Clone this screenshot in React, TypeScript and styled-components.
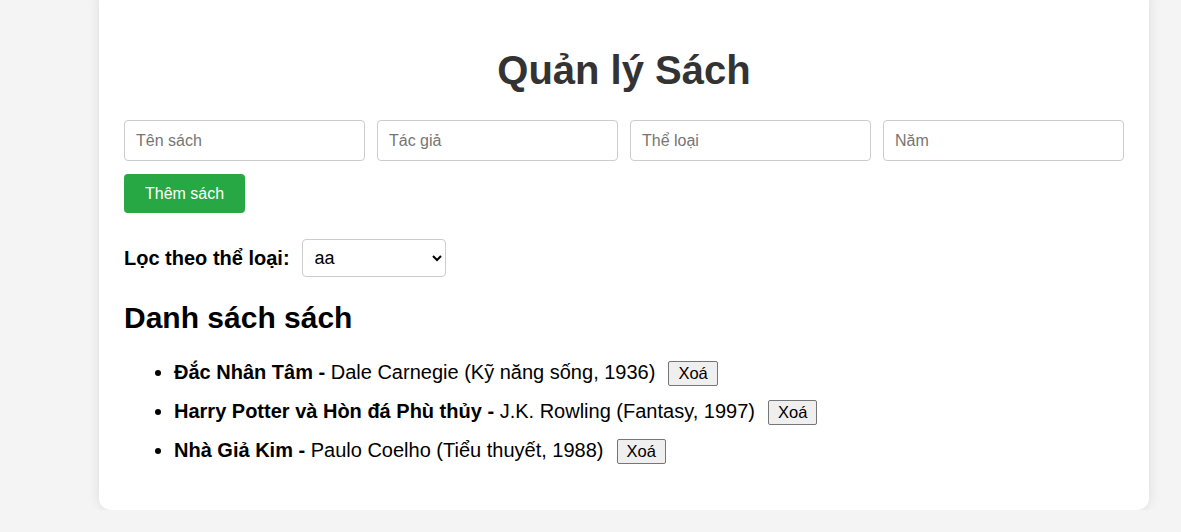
import React from "react";
import styled, { createGlobalStyle } from "styled-components";

const Global = createGlobalStyle`
  html, body {
    margin: 0;
    padding: 0;
    background: #f4f4f4;
    font-family: "Liberation Sans", Arial, sans-serif;
    overflow: hidden;
  }
`;

const Page = styled.div`
  padding-left: 99px;
  width: 1050px;
`;

const Card = styled.div`
  margin-top: -10px;
  background: #fff;
  border-radius: 12px;
  box-shadow: 0 0 12px rgba(0, 0, 0, 0.1);
  padding: 25px 25px 46px;
  display: flex;
  flex-direction: column;
`;

const Title = styled.h1`
  margin: 33px 0 27px;
  font-size: 40px;
  font-weight: bold;
  color: #333;
  text-align: center;
  line-height: 45px;
`;

const Fields = styled.div`
  display: grid;
  grid-template-columns: repeat(4, 1fr);
  gap: 12px;
`;

const Field = styled.input`
  box-sizing: border-box;
  height: 41px;
  padding: 0 11px;
  border: 1px solid #ccc;
  border-radius: 4px;
  font-family: "Liberation Sans", Arial, sans-serif;
  font-size: 16px;
  color: #333;
  outline: none;
  &::placeholder {
    color: #757575;
  }
`;

const AddButton = styled.button`
  align-self: flex-start;
  margin-top: 13px;
  height: 39px;
  padding: 0 21px;
  border: none;
  border-radius: 4px;
  background: #28a745;
  color: #fff;
  font-family: "Liberation Sans", Arial, sans-serif;
  font-size: 16px;
  cursor: pointer;
`;

const FilterRow = styled.div`
  display: flex;
  align-items: center;
  gap: 12px;
  margin-top: 26px;
`;

const FilterLabel = styled.label`
  font-size: 20px;
  font-weight: bold;
  color: #000;
`;

const Select = styled.select`
  box-sizing: border-box;
  width: 144px;
  height: 38px;
  padding: 0 8px;
  border: 1px solid #ccc;
  border-radius: 4px;
  background: #fff;
  font-family: "Liberation Sans", Arial, sans-serif;
  font-size: 18px;
  color: #000;
`;

const SectionTitle = styled.h2`
  margin: 23px 0 24px;
  font-size: 30px;
  font-weight: bold;
  line-height: 35px;
  color: #000;
`;

const List = styled.ul`
  margin: 0;
  padding-left: 50px;
  font-size: 20px;
  color: #000;
`;

const Item = styled.li`
  margin-bottom: 12px;
  line-height: 26px;
  &:last-child {
    margin-bottom: 0;
  }
`;

const DeleteButton = styled.button`
  margin-left: 13px;
  height: 25px;
  padding: 0 9px;
  border: 1px solid #767676;
  border-radius: 2px;
  background: #efefef;
  font-family: "Liberation Sans", Arial, sans-serif;
  font-size: 16.5px;
  color: #000;
  vertical-align: baseline;
`;

const books = [
  { title: "Đắc Nhân Tâm", author: "Dale Carnegie", genre: "Kỹ năng sống", year: 1936 },
  { title: "Harry Potter và Hòn đá Phù thủy", author: "J.K. Rowling", genre: "Fantasy", year: 1997 },
  { title: "Nhà Giả Kim", author: "Paulo Coelho", genre: "Tiểu thuyết", year: 1988 },
];

export default function App() {
  return (
    <Page>
      <Global />
      <Card>
        <Title>Quản lý Sách</Title>
        <Fields>
          <Field placeholder="Tên sách" />
          <Field placeholder="Tác giả" />
          <Field placeholder="Thể loại" />
          <Field placeholder="Năm" />
        </Fields>
        <AddButton>Thêm sách</AddButton>
        <FilterRow>
          <FilterLabel>Lọc theo thể loại:</FilterLabel>
          <Select defaultValue="aa">
            <option value="aa">aa</option>
          </Select>
        </FilterRow>
        <SectionTitle>Danh sách sách</SectionTitle>
        <List>
          {books.map((b) => (
            <Item key={b.title}>
              <strong>{b.title} -</strong> {b.author} ({b.genre}, {b.year})
              <DeleteButton>Xoá</DeleteButton>
            </Item>
          ))}
        </List>
      </Card>
    </Page>
  );
}
